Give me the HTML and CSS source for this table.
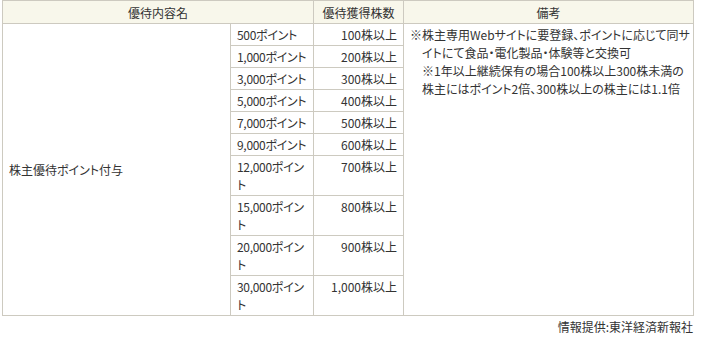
FILE: index.html
```html
<!DOCTYPE html>
<html>
<head>
<meta charset="utf-8">
<meta name="viewport" content="width=device-width, initial-scale=1">
<link rel="stylesheet" href="styles.css">
</head>
<body>

<div class="benefit">
  <table class="benefit-table">
    <colgroup>
      <col class="c-name">
      <col class="c-point">
      <col class="c-shares">
      <col class="c-note">
    </colgroup>
    <thead>
      <tr>
        <th colspan="2">優待内容名</th>
        <th>優待獲得株数</th>
        <th>備考</th>
      </tr>
    </thead>
    <tbody>
      <tr>
        <td class="name" rowspan="10">株主優待ポイント付与</td>
        <td class="point">500ポイント</td>
        <td class="num">100株以上</td>
        <td class="note" rowspan="10">
          <p class="mark">※株主専用Webサイトに要登録、ポイントに応じて同サ<br>イトにて食品・電化製品・体験等と交換可</p>
          <p class="sub">※1年以上継続保有の場合100株以上300株未満の<br>株主にはポイント2倍、300株以上の株主には1.1倍</p>
        </td>
      </tr>
      <tr><td class="point">1,000ポイント</td><td class="num">200株以上</td></tr>
      <tr><td class="point">3,000ポイント</td><td class="num">300株以上</td></tr>
      <tr><td class="point">5,000ポイント</td><td class="num">400株以上</td></tr>
      <tr><td class="point">7,000ポイント</td><td class="num">500株以上</td></tr>
      <tr><td class="point">9,000ポイント</td><td class="num">600株以上</td></tr>
      <tr><td class="point">12,000ポイン<br>ト</td><td class="num">700株以上</td></tr>
      <tr><td class="point">15,000ポイン<br>ト</td><td class="num">800株以上</td></tr>
      <tr><td class="point">20,000ポイン<br>ト</td><td class="num">900株以上</td></tr>
      <tr><td class="point">30,000ポイン<br>ト</td><td class="num">1,000株以上</td></tr>
    </tbody>
  </table>
  <p class="source">情報提供:東洋経済新報社</p>
</div>

</body>
</html>
```

FILE: styles.css
```css
body {
  margin: 0;
  font-family: "Noto Sans CJK JP", "Noto Sans", sans-serif;
  font-size: 12px;
  color: #333;
  font-feature-settings: "palt";
}

.benefit {
  width: 691px;
  margin-left: 2px;
}

.benefit-table {
  width: 100%;
  border-collapse: collapse;
  table-layout: fixed;
  line-height: 18px;
}

.c-name { width: 228px; }
.c-point { width: 83px; }
.c-shares { width: 90px; }
.c-note { width: 290px; }

.benefit-table th,
.benefit-table td {
  border: 1px solid #cdcac0;
  padding: 2px 6px 1px;
  vertical-align: top;
  text-align: left;
}

.benefit-table th {
  background-color: #f8f7eb;
  font-weight: normal;
  text-align: center;
  padding-top: 3px;
}

.benefit-table td.name {
  vertical-align: middle;
}

.benefit-table td.point {
  white-space: nowrap;
  letter-spacing: -0.3px;
}

.benefit-table td.num {
  text-align: right;
}

.note p {
  margin: 0;
  white-space: nowrap;
}

/* hanging indent after the ※ mark */
.note .mark {
  padding-left: 1em;
  text-indent: -1em;
}

.note .sub {
  padding-left: 1em;
}

.source {
  margin: 2px 0 0;
  text-align: right;
  line-height: 18px;
}
```
